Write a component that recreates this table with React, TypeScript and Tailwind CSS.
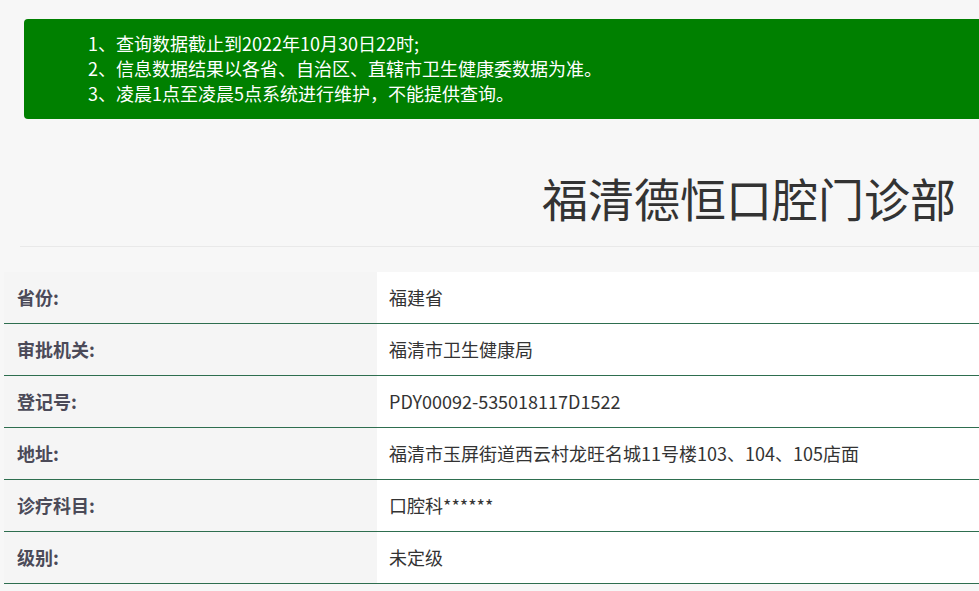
import React from "react";

const rows: [string, string][] = [
  ["省份:", "福建省"],
  ["审批机关:", "福清市卫生健康局"],
  ["登记号:", "PDY00092-535018117D1522"],
  ["地址:", "福清市玉屏街道西云村龙旺名城11号楼103、104、105店面"],
  ["诊疗科目:", "口腔科******"],
  ["级别:", "未定级"],
];

const font = { fontFamily: '"Microsoft YaHei", "Noto Sans CJK SC", "Noto Sans", sans-serif' };

export default function App() {
  return (
    <div className="w-[979px] h-[591px] overflow-hidden bg-[#f7f7f7]" style={font}>
      <div className="ml-[24px] mt-[19px] h-[100px] rounded-l-[4px] bg-[#008000] pl-[64px] py-[12px] text-[18px] leading-[25px] text-white">
        <p>1、查询数据截止到2022年10月30日22时;</p>
        <p>2、信息数据结果以各省、自治区、直辖市卫生健康委数据为准。</p>
        <p>3、凌晨1点至凌晨5点系统进行维护，不能提供查询。</p>
      </div>

      <div className="ml-[20px] border-b border-[#e9e9e9] pt-[49px] pb-[19px] pr-[23px] text-right">
        <h1 className="text-[46px] leading-[59px] font-normal text-[#333]">福清德恒口腔门诊部</h1>
      </div>

      <div className="ml-[4px] mt-[25px]">
        {rows.map(([k, v]) => (
          <div key={k} className="flex h-[52px] border-b border-[#2e6e4f]">
            <div className="w-[373px] shrink-0 bg-[#f5f5f5] pl-[13px] flex items-center text-[18px] font-bold text-[#4b4a58]">
              {k}
            </div>
            <div className="flex-1 bg-white pl-[12px] flex items-center text-[18px] text-[#333]">{v}</div>
          </div>
        ))}
      </div>
    </div>
  );
}
